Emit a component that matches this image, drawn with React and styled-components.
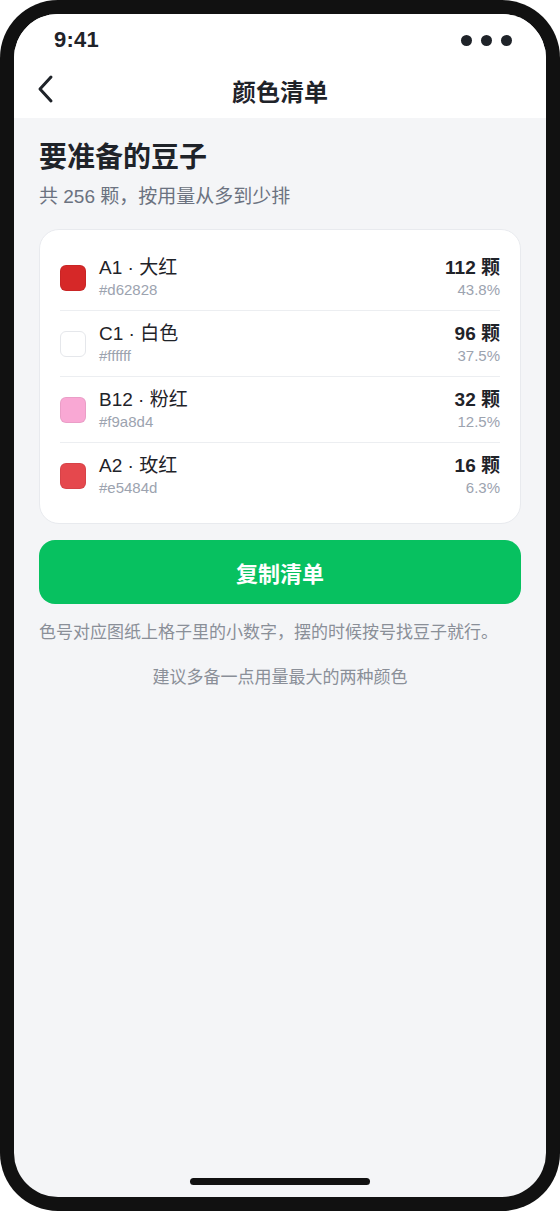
import React from 'react';
import styled, { createGlobalStyle } from 'styled-components';

const GlobalStyle = createGlobalStyle`
    html, body {
        margin: 0;
        padding: 0;
        background: #ffffff;
    }
    body {
        font-family: "Liberation Sans", "Noto Sans CJK SC", sans-serif;
        color: #1f2329;
    }
`;

const beans = [
    { code: 'A1', name: '大红', hex: '#d62828', count: 112, pct: '43.8%' },
    { code: 'C1', name: '白色', hex: '#ffffff', count: 96, pct: '37.5%' },
    { code: 'B12', name: '粉红', hex: '#f9a8d4', count: 32, pct: '12.5%' },
    { code: 'A2', name: '玫红', hex: '#e5484d', count: 16, pct: '6.3%' },
];

const App = () => {
    return (
        <>
            <GlobalStyle />
            <Frame>
                <Screen>
                    <StatusBar>
                        <Time>9:41</Time>
                        <Dots>
                            <Dot />
                            <Dot />
                            <Dot />
                        </Dots>
                    </StatusBar>
                    <NavBar>
                        <BackButton aria-label="返回">
                            <svg width="20" height="30" viewBox="0 0 20 30" fill="none">
                                <path d="M15 3 L4 15 L15 27" stroke="#1f2329" strokeWidth="3" strokeLinecap="round" strokeLinejoin="round" />
                            </svg>
                        </BackButton>
                        <NavTitle>颜色清单</NavTitle>
                    </NavBar>
                    <Content>
                        <Heading>要准备的豆子</Heading>
                        <Sub>共 256 颗，按用量从多到少排</Sub>
                        <Card>
                            {beans.map((b) => (
                                <Row key={b.code}>
                                    <Swatch $color={b.hex} />
                                    <Info>
                                        <Name>{b.code} · {b.name}</Name>
                                        <Hex>{b.hex}</Hex>
                                    </Info>
                                    <Stats>
                                        <Count>{b.count} 颗</Count>
                                        <Pct>{b.pct}</Pct>
                                    </Stats>
                                </Row>
                            ))}
                        </Card>
                        <CopyButton>复制清单</CopyButton>
                        <Note>色号对应图纸上格子里的小数字，摆的时候按号找豆子就行。</Note>
                        <Tip>建议多备一点用量最大的两种颜色</Tip>
                    </Content>
                    <HomeBar />
                </Screen>
            </Frame>
        </>
    );
};

const Frame = styled.div`
    width: 560px;
    height: 1211px;
    box-sizing: border-box;
    padding: 14px;
    background: #111111;
    border-radius: 58px;
`;

const Screen = styled.div`
    height: 100%;
    display: flex;
    flex-direction: column;
    background: #f4f5f7;
    border-radius: 44px;
    overflow: hidden;
`;

const StatusBar = styled.div`
    height: 52px;
    flex-shrink: 0;
    display: flex;
    align-items: center;
    justify-content: space-between;
    padding: 0 34px 0 40px;
    background: #ffffff;
`;

const Time = styled.span`
    font-size: 22px;
    font-weight: 700;
    color: #1f2329;
    letter-spacing: 0.2px;
`;

const Dots = styled.div`
    display: flex;
    gap: 9px;
`;

const Dot = styled.span`
    width: 11px;
    height: 11px;
    border-radius: 50%;
    background: #1f2329;
`;

const NavBar = styled.div`
    position: relative;
    height: 52px;
    flex-shrink: 0;
    display: flex;
    align-items: center;
    justify-content: center;
    padding-bottom: 4px;
    box-sizing: border-box;
    background: #ffffff;
`;

const BackButton = styled.button`
    position: absolute;
    left: 22px;
    top: 8px;
    border: none;
    background: none;
    padding: 0;
    display: flex;
`;

const NavTitle = styled.h1`
    margin: 0;
    font-size: 24px;
    font-weight: 700;
    color: #1f2329;
`;

const Content = styled.div`
    display: flex;
    flex-direction: column;
    padding: 22px 25px 0;
`;

const Heading = styled.h2`
    margin: 0;
    font-size: 28px;
    line-height: 36px;
    font-weight: 700;
    color: #1f2329;
`;

const Sub = styled.p`
    margin: 7px 0 0;
    font-size: 19px;
    line-height: 28px;
    color: #6b7280;
`;

const Card = styled.div`
    margin-top: 18px;
    padding: 15px 20px;
    background: #ffffff;
    border: 1px solid #e8eaee;
    border-radius: 20px;
`;

const Row = styled.div`
    display: flex;
    align-items: center;
    height: 66px;
    box-sizing: border-box;
    border-bottom: 1px solid #eceef1;
    &:last-child {
        border-bottom: none;
        height: 65px;
    }
`;

const Swatch = styled.div`
    width: 26px;
    height: 26px;
    box-sizing: border-box;
    border-radius: 6px;
    background: ${(p) => p.$color};
    border: 1px solid ${(p) => (p.$color === '#ffffff' ? '#e5e7eb' : 'rgba(0,0,0,0.06)')};
    flex-shrink: 0;
`;

const Info = styled.div`
    flex: 1;
    margin-left: 13px;
    display: flex;
    flex-direction: column;
`;

const Name = styled.span`
    font-size: 19px;
    line-height: 24px;
    color: #1f2329;
`;

const Hex = styled.span`
    font-size: 15px;
    line-height: 20px;
    color: #9ca3af;
`;

const Stats = styled.div`
    display: flex;
    flex-direction: column;
    align-items: flex-end;
`;

const Count = styled.span`
    font-size: 19px;
    line-height: 24px;
    font-weight: 700;
    color: #1f2329;
`;

const Pct = styled.span`
    font-size: 15px;
    line-height: 20px;
    color: #9ca3af;
`;

const CopyButton = styled.button`
    margin-top: 16px;
    height: 64px;
    border: none;
    border-radius: 16px;
    background: #07c160;
    color: #ffffff;
    font-family: inherit;
    font-size: 22px;
    font-weight: 700;
`;

const Note = styled.p`
    margin: 17px 0 0;
    font-size: 17px;
    line-height: 24px;
    color: #8a8f98;
`;

const Tip = styled.p`
    margin: 21px 0 0;
    font-size: 17px;
    line-height: 24px;
    color: #8a8f98;
    text-align: center;
`;

const HomeBar = styled.div`
    margin: auto auto 12px;
    width: 180px;
    height: 7px;
    border-radius: 4px;
    background: #111111;
`;

export default App;
